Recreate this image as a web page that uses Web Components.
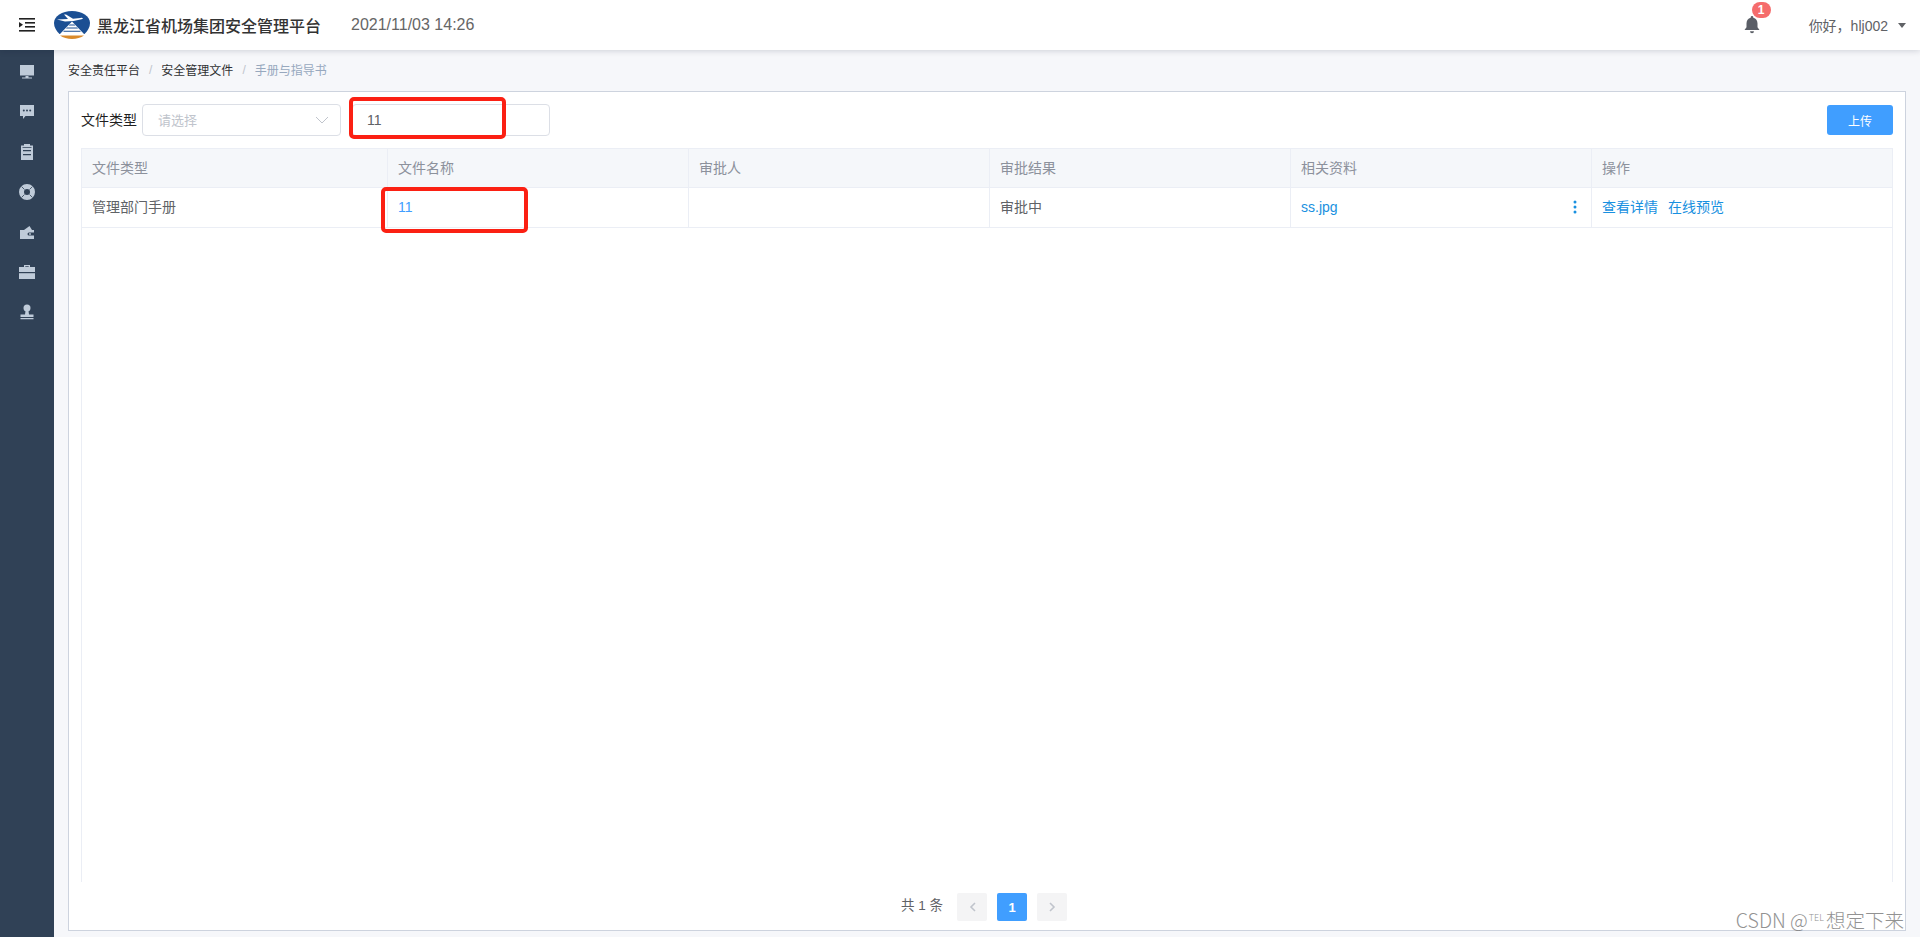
<!DOCTYPE html>
<html lang="zh">
<head>
<meta charset="utf-8">
<title>黑龙江省机场集团安全管理平台</title>
<style>
  html, body { margin: 0; height: 100%; overflow: hidden; }
  body {
    font-family: "Liberation Sans", "Noto Sans CJK SC", sans-serif;
    font-size: 14px;
    color: #606266;
    background: #f6f7fa;
  }
</style>
</head>
<body>
<app-shell>
  <top-bar slot="top"></top-bar>
  <side-nav slot="side"></side-nav>
  <bread-crumb>
    <span>安全责任平台</span>
    <span>安全管理文件</span>
    <span>手册与指导书</span>
  </bread-crumb>
  <main-card>
    <filter-bar slot="filter"></filter-bar>
    <file-table slot="table"></file-table>
    <page-nav slot="pager"></page-nav>
  </main-card>
</app-shell>
<script>
class AppShell extends HTMLElement {
  constructor() {
    super();
    const shadow = this.attachShadow({ mode: 'open' });
    shadow.innerHTML = `
    <style>
      :host { display: grid; grid-template-rows: 50px 1fr; height: 937px; position: relative; overflow: hidden; }
      .top { position: relative; z-index: 2; }
      .body { display: grid; grid-template-columns: 54px 1fr; min-height: 0; }
      .content { display: flex; flex-direction: column; min-height: 0; padding: 0 14px 6px; }
      /* watermark of the screenshot's source */
      .mark { position: absolute; font-family: "Noto Sans CJK SC", sans-serif; font-weight: 300; font-size: 19.5px; color: #777; opacity: .8; right: 16px; bottom: 3px; line-height: 28px; z-index: 3; white-space: nowrap; }
      .mark sup { font-size: 9px; vertical-align: 7px; line-height: 0; margin: 0 2px 0 1px; }
    </style>
    <div class="top"><slot name="top"></slot></div>
    <div class="body">
      <slot name="side"></slot>
      <div class="content"><slot></slot></div>
    </div>
    <div class="mark">CSDN @<sup>TEL</sup>想定下来</div>
    `;
  }
}

class TopBar extends HTMLElement {
  constructor() {
    super();
    const shadow = this.attachShadow({ mode: 'open' });
    shadow.innerHTML = `
    <style>
      :host { display: flex; align-items: center; height: 50px; background: #fff; box-shadow: 0 1px 6px rgba(0,21,41,.16); }
      .fold { margin-left: 19px; width: 16px; height: 14px; flex: none; }
      .logo { margin-left: 19px; width: 36px; height: 28px; flex: none; }
      .title { margin-left: 7px; font-size: 16px; font-weight: 500; color: #333; white-space: nowrap; }
      .date { margin-left: 30px; font-size: 16px; color: #666; white-space: nowrap; }
      .right { margin-left: auto; display: flex; align-items: center; }
      .bell { position: relative; width: 16px; height: 18px; margin-right: 49px; }
      .badge { position: absolute; left: 8px; top: -14px; width: 19px; height: 16px; border-radius: 8px; background: #f56c6c; color: #fff; font-size: 12px; font-weight: 700; line-height: 16px; text-align: center; }
      .hello { font-size: 14px; color: #606266; white-space: nowrap; }
      .caret { margin: 1px 14px 0 10px; width: 0; height: 0; border: 4px solid transparent; border-top: 5px solid #606266; border-bottom: 0; }
    </style>
    <svg class="fold" viewBox="0 0 16 14" fill="#222">
      <rect x="0" y="0" width="16" height="1.6"/>
      <rect x="6" y="4" width="10" height="1.6"/>
      <rect x="6" y="8" width="10" height="1.6"/>
      <rect x="0" y="12" width="16" height="1.6"/>
      <path d="M0 4l4 2.800L0 9.600z"/>
    </svg>
    <svg class="logo" viewBox="0 0 36 28">
      <path d="M18 0C8 0 0 5 0 12c0 4.500 2.500 8 5.500 11h25c3-3 5.500-6.500 5.500-11C36 5 28 0 18 0z" fill="#1b4f93"/>
      <path d="M3 8.500l11-.6L10 3.500h2l7 4.300 7.500-.9c2.500-.3 3.500.6 1 1.300L19.500 10 11 10.400z" fill="#fff"/>
      <path d="M18 10.500L31 24H5z" fill="#fff"/>
      <path d="M15.500 13.500h5l.8 1h-6.600zM12.800 16.500h10.400l.8 1H12zM10 19.800h16l.8 1H9.200z" fill="#1b4f93"/>
      <path d="M6 24.500h24c-3 2.300-7.500 3.500-12 3.500S9 26.800 6 24.500z" fill="#d98a2b"/>
    </svg>
    <span class="title">黑龙江省机场集团安全管理平台</span>
    <span class="date">2021/11/03 14:26</span>
    <div class="right">
      <div class="bell">
        <svg width="16" height="18" viewBox="0 0 16 18" fill="#5a5e66">
          <path d="M8 0a1.300 1.300 0 0 1 1.300 1.300v.5C12 2.500 13.500 4.800 13.500 7.500v3.700L15.500 14H.5l2-2.800V7.500C2.500 4.800 4 2.500 6.700 1.800v-.5A1.300 1.300 0 0 1 8 0z"/>
          <path d="M6 15.300h4a2 2 0 0 1-4 0z"/>
        </svg>
        <span class="badge">1</span>
      </div>
      <span class="hello">你好，hlj002</span>
      <span class="caret"></span>
    </div>
    `;
  }
}

class SideNav extends HTMLElement {
  constructor() {
    super();
    const shadow = this.attachShadow({ mode: 'open' });
    const icons = [
      '<path d="M1 1h14v10.500H1z"/><path d="M6.500 12h3v1.500H13v1H3v-1h3.500z"/>',
      '<path d="M1 1h14v11H6.500L4 15v-3H1z"/><g fill="#304156"><circle cx="4.800" cy="6.500" r="1"/><circle cx="8" cy="6.500" r="1"/><circle cx="11.200" cy="6.500" r="1"/></g>',
      '<path d="M5 1.500V0h6v1.500h3V16H2V1.500z"/><path d="M4 6h8v1.200H4zM4 10h8v1.200H4zM3.500 3h9v.8h-9z" fill="#304156"/>',
      '<path fill-rule="evenodd" d="M8 0a8 8 0 1 1 0 16A8 8 0 0 1 8 0zm0 5a3 3 0 1 0 0 6 3 3 0 0 0 0-6z"/><path d="M2.500 2.500l3 3M13.500 2.500l-3 3M2.500 13.500l3-3M13.500 13.500l-3-3" stroke="#304156" stroke-width=".8"/>',
      '<path d="M1 6h14v9H1z"/><path d="M5 6l5.500-4L13 6z"/><path d="M10 8.500h6v3h-6a1.500 1.500 0 0 1 0-3z" fill="#304156"/><circle cx="11" cy="10" r=".9"/>',
      '<path d="M5 3V1h6v2h5v5H0V3zm1.300 0h3.400V2.200H6.300z" fill-rule="evenodd"/><path d="M0 9.200h16V15H0z"/>',
      '<circle cx="8" cy="4" r="3.500"/><path d="M6.500 7h3l.5 3.500h4.500V13h-13v-2.500H6zM1.500 14h13v1.300h-13z"/>'
    ];
    shadow.innerHTML = `
    <style>
      :host { display: flex; flex-direction: column; align-items: center; background: #304156; padding-top: 2px; }
      .item { height: 40px; flex: none; display: flex; align-items: center; justify-content: center; }
      svg { width: 16px; height: 16px; fill: #bfcbd9; display: block; }
    </style>
    ${icons.map(d => `<div class="item"><svg viewBox="0 0 16 16">${d}</svg></div>`).join('')}
    `;
  }
}

class BreadCrumb extends HTMLElement {
  constructor() {
    super();
    const shadow = this.attachShadow({ mode: 'open' });
    shadow.innerHTML = `
    <style>
      :host { display: flex; align-items: center; height: 41px; box-sizing: border-box; padding-bottom: 2px; flex: none; font-size: 12px; color: #303133; }
      .sep { color: #c0c4cc; margin: 0 9px; }
      .last { color: #97a8be; }
    </style>
    <div id="out" style="display:contents"></div>
    `;
    const out = shadow.getElementById('out');
    [...this.children].forEach((item, i, all) => {
      const s = document.createElement('span');
      s.textContent = item.textContent;
      if (i === all.length - 1) s.className = 'last';
      out.appendChild(s);
      if (i < all.length - 1) {
        const sep = document.createElement('span');
        sep.className = 'sep';
        sep.textContent = '/';
        out.appendChild(sep);
      }
    });
  }
}

class MainCard extends HTMLElement {
  constructor() {
    super();
    const shadow = this.attachShadow({ mode: 'open' });
    shadow.innerHTML = `
    <style>
      :host { display: flex; flex-direction: column; flex: 1; min-height: 0; background: #fff; border: 1px solid #cdd3de; padding: 12px 12px 0; }
      .tbl { flex: 1; min-height: 0; display: flex; margin-top: 12px; }
    </style>
    <slot name="filter"></slot>
    <div class="tbl"><slot name="table"></slot></div>
    <slot name="pager"></slot>
    `;
  }
}

class FilterBar extends HTMLElement {
  constructor() {
    super();
    const shadow = this.attachShadow({ mode: 'open' });
    shadow.innerHTML = `
    <style>
      :host { display: flex; align-items: center; height: 32px; flex: none; position: relative; }
      .label { font-size: 14px; color: #1f1f1f; width: 61px; flex: none; white-space: nowrap; padding-bottom: 2px; }
      .box { box-sizing: border-box; height: 32px; border: 1px solid #dcdfe6; border-radius: 4px; display: flex; align-items: center; padding-left: 15px; font-size: 13px; background: #fff; }
      .select { width: 199px; color: #c0c4cc; position: relative; padding-bottom: 2px; }
      .select svg { position: absolute; right: 11px; top: 11px; }
      .input { width: 198px; margin-left: 11px; color: #606266; font-size: 14px; padding-left: 14px; }
      .btn { margin-left: auto; width: 66px; height: 30px; border-radius: 3px; background: #409eff; color: #fff; font-size: 12px; display: flex; align-items: center; justify-content: center; }
      .red { position: absolute; left: 268px; top: -7px; width: 157px; height: 42px; box-sizing: border-box; border: 4px solid #fb2013; border-radius: 5px; }
    </style>
    <span class="label">文件类型</span>
    <div class="box select">请选择
      <svg width="14" height="8" viewBox="0 0 14 8" fill="none" stroke="#c0c4cc" stroke-width="1"><path d="M1 1l6 6 6-6"/></svg>
    </div>
    <div class="box input">11</div>
    <div class="btn">上传</div>
    <div class="red"></div>
    `;
  }
}

class FileTable extends HTMLElement {
  constructor() {
    super();
    const shadow = this.attachShadow({ mode: 'open' });
    const heads = ['文件类型', '文件名称', '审批人', '审批结果', '相关资料', '操作'];
    shadow.innerHTML = `
    <style>
      :host { display: block; flex: 1; position: relative; border-left: 1px solid #ebeef5; border-right: 1px solid #ebeef5; }
      .row { display: grid; grid-template-columns: 306px 301px 301px 301px 301px 1fr; }
      .head { height: 38px; background: #f5f7fa; color: #8c919c; border-top: 1px solid #ebeef5; }
      .head .cell { padding-bottom: 3px; }
      .body { height: 39px; border-top: 1px solid #ebeef5; border-bottom: 1px solid #ebeef5; color: #606266; }
      .cell { display: flex; align-items: center; padding: 0 10px 3px; border-right: 1px solid #ebeef5; font-size: 14px; white-space: nowrap; }
      .cell:last-child { border-right: 0; }
      .link { color: #409eff; padding-bottom: 1px; }
      .op { color: #1890e0; gap: 10px; }
      .file { color: #1890e0; justify-content: space-between; padding-right: 14px; padding-bottom: 1px; }
      .file svg { display: block; }
      .red { position: absolute; left: 299px; top: 39px; width: 147px; height: 46px; box-sizing: border-box; border: 4px solid #fb2013; border-radius: 5px; }
    </style>
    <div class="row head">${heads.map(h => `<div class="cell">${h}</div>`).join('')}</div>
    <div class="row body">
      <div class="cell">管理部门手册</div>
      <div class="cell link">11</div>
      <div class="cell"></div>
      <div class="cell">审批中</div>
      <div class="cell file"><span>ss.jpg</span>
        <svg width="4" height="14" viewBox="0 0 4 14" fill="#1890e0"><circle cx="2" cy="2" r="1.500"/><circle cx="2" cy="7" r="1.500"/><circle cx="2" cy="12" r="1.500"/></svg>
      </div>
      <div class="cell op"><span>查看详情</span><span>在线预览</span></div>
    </div>
    <div class="red"></div>
    `;
  }
}

class PageNav extends HTMLElement {
  constructor() {
    super();
    const shadow = this.attachShadow({ mode: 'open' });
    shadow.innerHTML = `
    <style>
      :host { display: flex; align-items: flex-start; justify-content: center; height: 48px; flex: none; padding: 11px 6px 0 0; box-sizing: border-box; }
      .total { font-size: 13.5px; color: #606266; line-height: 26px; margin-right: 14px; white-space: pre; }
      .btn { width: 30px; height: 28px; margin-right: 10px; border-radius: 2px; background: #f4f4f5; display: flex; align-items: center; justify-content: center; font-size: 13px; font-weight: 700; }
      .btn:last-child { margin-right: 0; }
      .on { background: #409eff; color: #fff; }
    </style>
    <span class="total">共 1 条</span>
    <div class="btn"><svg width="7" height="10" viewBox="0 0 7 10" fill="none" stroke="#c0c4cc" stroke-width="1.600"><path d="M6 1L2 5l4 4"/></svg></div>
    <div class="btn on">1</div>
    <div class="btn"><svg width="7" height="10" viewBox="0 0 7 10" fill="none" stroke="#c0c4cc" stroke-width="1.600"><path d="M1 1l4 4-4 4"/></svg></div>
    `;
  }
}

customElements.define('app-shell', AppShell);
customElements.define('top-bar', TopBar);
customElements.define('side-nav', SideNav);
customElements.define('bread-crumb', BreadCrumb);
customElements.define('main-card', MainCard);
customElements.define('filter-bar', FilterBar);
customElements.define('file-table', FileTable);
customElements.define('page-nav', PageNav);
</script>
</body>
</html>
